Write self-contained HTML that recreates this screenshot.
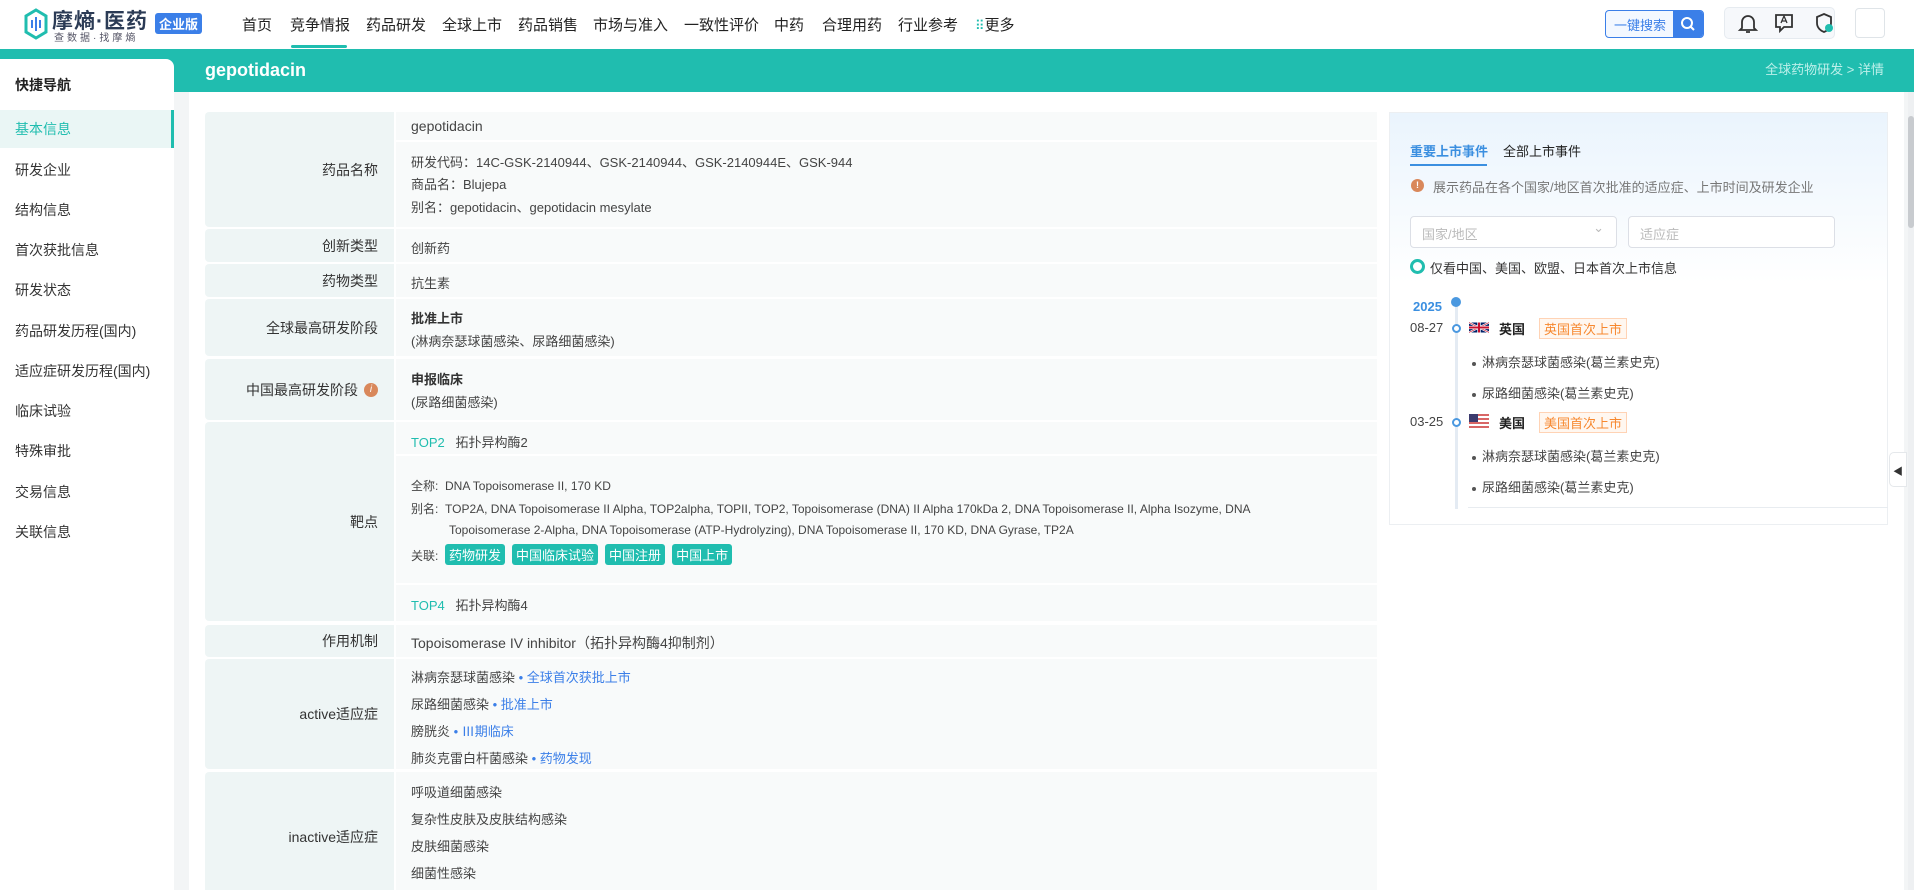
<!DOCTYPE html>
<html><head><meta charset="utf-8"><style>
*{box-sizing:border-box;margin:0;padding:0}
html,body{width:1914px;height:890px;overflow:hidden}
body{background:#f3f5f6;font-family:"Liberation Sans","Noto Sans CJK SC",sans-serif;color:#333;font-size:14px;position:relative}
.abs{position:absolute}
.top{left:0;top:0;width:1914px;height:49px;background:#fff}
.nav{top:14px;font-size:15px;color:#222}
.teal{left:0;top:49px;width:1914px;height:43px;background:#20bdaf}
.side{left:0;top:59px;width:174px;height:831px;background:#fff;border-top-right-radius:8px}
.side div{position:absolute;left:15px;font-size:14px;color:#333}
.main{left:189px;top:92px;width:1715px;height:798px;background:#fff}
.lab{position:absolute;left:205px;width:189px;background:#eef5f5;text-align:right;padding-right:16px;font-size:14px;color:#333;display:flex;align-items:center;justify-content:flex-end;border-radius:4px 0 0 4px}
.val{position:absolute;left:396px;width:981px;background:#f8fafa;padding-left:15px;font-size:14px;color:#444}
.t{position:absolute;left:411px;font-size:14px;color:#444;white-space:nowrap}
.blue{color:#3b7fe8}
.tag{display:inline-block;background:#20bdaf;color:#fff;border-radius:3px;padding:1px 4px;margin-right:7px;font-size:14px}
.rp{left:1389px;top:112px;width:499px;height:413px;border:1px solid #eceff2;background:linear-gradient(#eaf4fd,#fff 170px)}
.dot{position:absolute;width:9px;height:9px;border:2px solid #4a98e0;border-radius:50%;background:#fff}
.li{position:absolute;left:1472px;font-size:13px;color:#444}
.li:before{content:"";display:inline-block;width:4px;height:4px;background:#555;border-radius:50%;margin-right:6px;vertical-align:middle}
.ot{display:inline-block;border:1px solid #ffd3b5;background:#fff7f0;color:#f7882f;font-size:13px;padding:0 4px;margin-left:14px;font-weight:normal}
</style></head><body>
<div class="abs top"></div>
<svg class="abs" style="left:24px;top:8px" width="24" height="32" viewBox="0 0 24 32"><path d="M12 2 L22 8 V24 L12 30 L2 24 V8 Z" fill="none" stroke="#20bdaf" stroke-width="3"/><path d="M8 12v8M12 9v14M16 12v8" stroke="#3b7fe8" stroke-width="2"/></svg>
<div class="abs" style="left:52px;top:5px;font-size:21px;font-weight:bold;color:#2b3b55;letter-spacing:1px">摩熵·医药</div>
<div class="abs" style="left:54px;top:29px;font-size:10px;color:#556;letter-spacing:3px">查数据·找摩熵</div>
<div class="abs" style="left:155px;top:13px;background:#3b7fe8;color:#fff;font-size:13px;font-weight:bold;padding:1px 4px;border-radius:3px">企业版</div>
<div class="abs nav" style="left:242px">首页</div>
<div class="abs nav" style="left:290px">竞争情报</div>
<div class="abs" style="left:291px;top:45px;width:56px;height:3px;background:#20bdaf;border-radius:2px"></div>
<div class="abs nav" style="left:366px">药品研发</div>
<div class="abs nav" style="left:442px">全球上市</div>
<div class="abs nav" style="left:518px">药品销售</div>
<div class="abs nav" style="left:593px">市场与准入</div>
<div class="abs nav" style="left:684px">一致性评价</div>
<div class="abs nav" style="left:774px">中药</div>
<div class="abs nav" style="left:822px">合理用药</div>
<div class="abs nav" style="left:898px">行业参考</div>
<div class="abs nav" style="left:975px"><span style="color:#20bdaf;font-size:13px">⠿</span>更多</div>
<div class="abs" style="left:1605px;top:10px;width:99px;height:28px;border:1px solid #3b7fe8;border-radius:4px;background:#f3f8ff;overflow:hidden"><span style="position:absolute;left:8px;top:4px;color:#3b7fe8;font-size:13px">一键搜索</span><div style="position:absolute;right:0;top:0;width:30px;height:28px;background:#3b7fe8"><svg width="30" height="26" viewBox="0 0 30 26"><circle cx="14" cy="12" r="5" fill="none" stroke="#fff" stroke-width="2"/><path d="M18 16l3 3" stroke="#fff" stroke-width="2"/></svg></div></div>
<div class="abs" style="left:1724px;top:7px;width:111px;height:32px;border:1px solid #e6ebf0;border-radius:5px;background:#f6f8fb"></div>
<svg class="abs" style="left:1736px;top:11px" width="24" height="24" viewBox="0 0 24 24"><path d="M6 17V11a6 6 0 0112 0v6l2 2H4z M10 21h4" fill="none" stroke="#333" stroke-width="1.8"/></svg>
<svg class="abs" style="left:1773px;top:11px" width="24" height="24" viewBox="0 0 24 24"><path d="M3 4h16v12h-8l-4 4v-4H3z" fill="none" stroke="#333" stroke-width="1.8"/><path d="M8 12l3-7 3 7M9 10h4" fill="none" stroke="#333" stroke-width="1.3"/></svg>
<svg class="abs" style="left:1812px;top:11px" width="24" height="24" viewBox="0 0 24 24"><path d="M12 3l7 3v6c0 5-4 8-7 9-3-1-7-4-7-9V6z" fill="none" stroke="#333" stroke-width="1.8"/><circle cx="17" cy="17" r="4" fill="#20bdaf"/></svg>
<div class="abs" style="left:1855px;top:8px;width:30px;height:30px;border:1px solid #dfe4e8;border-radius:4px;background:#fff"></div>

<div class="abs teal"></div>
<div class="abs" style="left:205px;top:60px;color:#fff;font-size:18px;font-weight:bold">gepotidacin</div>
<div class="abs" style="right:30px;top:59px;color:#bdf0ea;font-size:13px">全球药物研发 &gt; 详情</div>

<div class="abs side">
<div style="top:16px;font-weight:bold;color:#222">快捷导航</div>
<div style="left:0;top:51px;width:174px;height:38px;background:#eaf6f5;border-right:3px solid #20bdaf"></div>
<div style="top:60px;color:#20bdaf">基本信息</div>
<div style="top:101px">研发企业</div>
<div style="top:141px">结构信息</div>
<div style="top:181px">首次获批信息</div>
<div style="top:221px">研发状态</div>
<div style="top:262px">药品研发历程(国内)</div>
<div style="top:302px">适应症研发历程(国内)</div>
<div style="top:342px">临床试验</div>
<div style="top:382px">特殊审批</div>
<div style="top:423px">交易信息</div>
<div style="top:463px">关联信息</div>
</div>

<div class="abs main"></div>

<div class="lab" style="top:112px;height:115px">药品名称</div>
<div class="val" style="top:112px;height:28px"></div>
<div class="val" style="top:142px;height:85px"></div>
<div class="t" style="top:118px">gepotidacin</div>
<div class="t" style="top:152px;font-size:13px">研发代码：14C-GSK-2140944、GSK-2140944、GSK-2140944E、GSK-944</div>
<div class="t" style="top:174px;font-size:13px">商品名：Blujepa</div>
<div class="t" style="top:197px;font-size:13px">别名：gepotidacin、gepotidacin mesylate</div>

<div class="lab" style="top:229px;height:33px">创新类型</div><div class="val" style="top:229px;height:33px"></div>
<div class="t" style="top:238px;font-size:13px">创新药</div>
<div class="lab" style="top:264px;height:33px">药物类型</div><div class="val" style="top:264px;height:33px"></div>
<div class="t" style="top:273px;font-size:13px">抗生素</div>
<div class="lab" style="top:299px;height:57px">全球最高研发阶段</div><div class="val" style="top:299px;height:57px"></div>
<div class="t" style="top:308px;font-weight:bold;color:#333;font-size:13px">批准上市</div>
<div class="t" style="top:331px;font-size:13px">(淋病奈瑟球菌感染、尿路细菌感染)</div>
<div class="lab" style="top:359px;height:61px">中国最高研发阶段<span style="display:inline-block;width:14px;height:14px;border-radius:50%;background:#d9885b;color:#fff;font-size:10px;text-align:center;line-height:14px;margin-left:6px;font-style:italic">i</span></div><div class="val" style="top:359px;height:61px"></div>
<div class="t" style="top:369px;font-weight:bold;color:#333;font-size:13px">申报临床</div>
<div class="t" style="top:392px;font-size:13px">(尿路细菌感染)</div>

<div class="lab" style="top:422px;height:199px">靶点</div>
<div class="val" style="top:422px;height:32px"></div>
<div class="val" style="top:456px;height:127px"></div>
<div class="val" style="top:585px;height:36px"></div>
<div class="t" style="top:432px;font-size:13px"><span style="color:#20bdaf">TOP2</span>&nbsp;&nbsp; 拓扑异构酶2</div>
<div class="t" style="top:477px;font-size:12px">全称:&nbsp; DNA Topoisomerase II, 170 KD</div>
<div class="t" style="top:500px;font-size:12px">别名:&nbsp; TOP2A, DNA Topoisomerase II Alpha, TOP2alpha, TOPII, TOP2, Topoisomerase (DNA) II Alpha 170kDa 2, DNA Topoisomerase II, Alpha Isozyme, DNA</div>
<div class="t" style="top:523px;left:449px;font-size:12px">Topoisomerase 2-Alpha, DNA Topoisomerase (ATP-Hydrolyzing), DNA Topoisomerase II, 170 KD, DNA Gyrase, TP2A</div>
<div class="t" style="top:544px;font-size:12px">关联:&nbsp; <span class="tag" style="font-size:13px">药物研发</span><span class="tag" style="font-size:13px">中国临床试验</span><span class="tag" style="font-size:13px">中国注册</span><span class="tag" style="font-size:13px">中国上市</span></div>
<div class="t" style="top:595px;font-size:13px"><span style="color:#20bdaf">TOP4</span>&nbsp;&nbsp; 拓扑异构酶4</div>

<div class="lab" style="top:625px;height:32px">作用机制</div><div class="val" style="top:625px;height:32px"></div>
<div class="t" style="top:633px">Topoisomerase IV inhibitor（拓扑异构酶4抑制剂）</div>

<div class="lab" style="top:659px;height:110px">active适应症</div><div class="val" style="top:659px;height:110px"></div>
<div class="t" style="top:667px;font-size:13px">淋病奈瑟球菌感染<span class="blue"> • 全球首次获批上市</span></div>
<div class="t" style="top:694px;font-size:13px">尿路细菌感染<span class="blue"> • 批准上市</span></div>
<div class="t" style="top:721px;font-size:13px">膀胱炎<span class="blue"> • Ⅲ期临床</span></div>
<div class="t" style="top:748px;font-size:13px">肺炎克雷白杆菌感染<span class="blue"> • 药物发现</span></div>

<div class="lab" style="top:772px;height:130px">inactive适应症</div><div class="val" style="top:772px;height:130px"></div>
<div class="t" style="top:782px;font-size:13px">呼吸道细菌感染</div>
<div class="t" style="top:809px;font-size:13px">复杂性皮肤及皮肤结构感染</div>
<div class="t" style="top:836px;font-size:13px">皮肤细菌感染</div>
<div class="t" style="top:863px;font-size:13px">细菌性感染</div>

<div class="abs rp"></div>
<div class="abs" style="left:1410px;top:141px;color:#3b8fe0;font-size:13px;font-weight:bold">重要上市事件</div>
<div class="abs" style="left:1410px;top:164px;width:77px;height:2px;background:#3b8fe0"></div>
<div class="abs" style="left:1503px;top:141px;color:#222;font-size:13px">全部上市事件</div>
<div class="abs" style="left:1411px;top:179px;width:13px;height:13px;border-radius:50%;background:#d9885b;color:#fff;font-size:9px;text-align:center;line-height:13px;font-weight:bold">!</div>
<div class="abs" style="left:1433px;top:177px;color:#777;font-size:13px">展示药品在各个国家/地区首次批准的适应症、上市时间及研发企业</div>
<div class="abs" style="left:1410px;top:216px;width:207px;height:32px;border:1px solid #dcdfe6;border-radius:4px;background:#fff;color:#bbb;font-size:13px;padding:7px 11px">国家/地区<span style="position:absolute;right:12px;top:3px;color:#bbb">⌄</span></div>
<div class="abs" style="left:1628px;top:216px;width:207px;height:32px;border:1px solid #dcdfe6;border-radius:4px;background:#fff;color:#bbb;font-size:13px;padding:7px 11px">适应症</div>
<div class="abs" style="left:1410px;top:259px;width:15px;height:15px;border:3px solid #20bdaf;border-radius:50%"></div>
<div class="abs" style="left:1430px;top:258px;font-size:13px;color:#333">仅看中国、美国、欧盟、日本首次上市信息</div>

<div class="abs" style="left:1455px;top:306px;width:3px;height:203px;background:#e4ebf3"></div>
<div class="abs" style="left:1451px;top:297px;width:10px;height:10px;border-radius:50%;background:#4a98e0"></div>
<div class="abs" style="left:1413px;top:299px;color:#3b8fe0;font-weight:bold;font-size:13px">2025</div>
<div class="abs" style="left:1410px;top:320px;font-size:13px;color:#444">08-27</div>
<div class="dot" style="left:1452px;top:324px"></div>
<svg class="abs" style="left:1469px;top:320px" width="20" height="15" viewBox="0 0 60 30"><rect width="60" height="30" fill="#012169"/><path d="M0 0L60 30M60 0L0 30" stroke="#fff" stroke-width="6"/><path d="M0 0L60 30M60 0L0 30" stroke="#C8102E" stroke-width="2"/><path d="M30 0v30M0 15h60" stroke="#fff" stroke-width="10"/><path d="M30 0v30M0 15h60" stroke="#C8102E" stroke-width="6"/></svg>
<div class="abs" style="left:1499px;top:318px;font-size:13px;font-weight:bold;color:#222">英国<span class="ot">英国首次上市</span></div>
<div class="li" style="top:352px">淋病奈瑟球菌感染(葛兰素史克)</div>
<div class="li" style="top:383px">尿路细菌感染(葛兰素史克)</div>
<div class="abs" style="left:1410px;top:414px;font-size:13px;color:#444">03-25</div>
<div class="dot" style="left:1452px;top:418px"></div>
<svg class="abs" style="left:1469px;top:414px" width="20" height="15" viewBox="0 0 20 15"><rect width="20" height="15" fill="#fff"/><path d="M0 1h20M0 5h20M0 9h20M0 13h20" stroke="#c33" stroke-width="1.6"/><rect width="9" height="8" fill="#3c3b6e"/></svg>
<div class="abs" style="left:1499px;top:412px;font-size:13px;font-weight:bold;color:#222">美国<span class="ot">美国首次上市</span></div>
<div class="li" style="top:446px">淋病奈瑟球菌感染(葛兰素史克)</div>
<div class="li" style="top:477px">尿路细菌感染(葛兰素史克)</div>
<div class="abs" style="left:1468px;top:507px;width:420px;height:1px;background:#e8ecf0"></div>

<div class="abs" style="left:1889px;top:452px;width:18px;height:35px;background:#fff;border:1px solid #e5e8eb;border-radius:5px 0 0 5px;font-size:10px;color:#333;padding:10px 0 0 3px">◀</div>
<div class="abs" style="left:1908px;top:92px;width:6px;height:798px;background:#eef0f2"></div>
<div class="abs" style="left:1908px;top:116px;width:6px;height:112px;background:#c8cbcf;border-radius:3px"></div>
</body></html>
